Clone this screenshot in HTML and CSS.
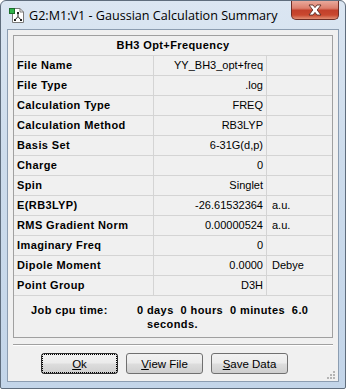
FILE: index.html
```html
<!DOCTYPE html>
<html lang="en">
<head>
  <meta charset="UTF-8">
  <title>G2:M1:V1 - Gaussian Calculation Summary</title>
  <link rel="stylesheet" href="styles.css">
</head>
<body>
  <div class="window">
    <div class="titlebar">
      <svg class="app-icon" width="16" height="16" viewBox="0 0 16 16">
        <path d="M3.5 1.5 H11 L14.5 5 V15.5 H3.5 Z" fill="#fff" stroke="#7a7a7a"/>
        <path d="M11 1.5 V5 H14.5" fill="none" stroke="#7a7a7a"/>
        <rect x="0.5" y="1.5" width="5" height="5" fill="#2fb34a" stroke="#1c6e2c"/>
        <path d="M9 6 V9.5 M9 9.5 L6 13 M9 9.5 L12 13" fill="none" stroke="#222" stroke-width="1"/>
        <rect x="8" y="5" width="2" height="2" fill="#222"/>
        <rect x="5" y="12" width="2" height="2" fill="#222"/>
        <rect x="11" y="12" width="2" height="2" fill="#222"/>
      </svg>
      <span class="title">G2:M1:V1 - Gaussian Calculation Summary</span>
      <div class="close">
        <svg width="14" height="12" viewBox="0 0 14 12">
          <path d="M1 1 H5 L7 3.6 L9 1 H13 L9.2 6 L13 11 H9 L7 8.4 L5 11 H1 L4.8 6 Z" fill="#fff" stroke="#5a2a22" stroke-width="0.9"/>
        </svg>
      </div>
    </div>

    <div class="client">
      <div class="summary">
        <div class="cell head">BH3 Opt+Frequency</div>

        <div class="cell label">File Name</div>
        <div class="cell value">YY_BH3_opt+freq</div>
        <div class="cell unit"></div>

        <div class="cell label">File Type</div>
        <div class="cell value">.log</div>
        <div class="cell unit"></div>

        <div class="cell label">Calculation Type</div>
        <div class="cell value">FREQ</div>
        <div class="cell unit"></div>

        <div class="cell label">Calculation Method</div>
        <div class="cell value">RB3LYP</div>
        <div class="cell unit"></div>

        <div class="cell label">Basis Set</div>
        <div class="cell value">6-31G(d,p)</div>
        <div class="cell unit"></div>

        <div class="cell label">Charge</div>
        <div class="cell value">0</div>
        <div class="cell unit"></div>

        <div class="cell label">Spin</div>
        <div class="cell value">Singlet</div>
        <div class="cell unit"></div>

        <div class="cell label">E(RB3LYP)</div>
        <div class="cell value">-26.61532364</div>
        <div class="cell unit">a.u.</div>

        <div class="cell label">RMS Gradient Norm</div>
        <div class="cell value">0.00000524</div>
        <div class="cell unit">a.u.</div>

        <div class="cell label">Imaginary Freq</div>
        <div class="cell value">0</div>
        <div class="cell unit"></div>

        <div class="cell label">Dipole Moment</div>
        <div class="cell value">0.0000</div>
        <div class="cell unit">Debye</div>

        <div class="cell label">Point Group</div>
        <div class="cell value">D3H</div>
        <div class="cell unit"></div>

        <div class="cell job">
          <span class="job-label">Job cpu time:</span>
          <span class="job-value">0 days&nbsp; 0 hours&nbsp; 0 minutes&nbsp; 6.0 seconds.</span>
        </div>
      </div>

      <div class="separator"></div>

      <div class="buttons">
        <button class="btn default"><span class="focus"><u>O</u>k</span></button>
        <button class="btn"><span><u>V</u>iew File</span></button>
        <button class="btn"><span><u>S</u>ave Data</span></button>
      </div>

      <svg class="grip" width="10" height="10" viewBox="0 0 10 10">
        <g fill="#b4b4b4">
          <rect x="7" y="1" width="2" height="2"/>
          <rect x="4" y="4" width="2" height="2"/>
          <rect x="7" y="4" width="2" height="2"/>
          <rect x="1" y="7" width="2" height="2"/>
          <rect x="4" y="7" width="2" height="2"/>
          <rect x="7" y="7" width="2" height="2"/>
        </g>
      </svg>
    </div>
  </div>
</body>
</html>
```

FILE: styles.css
```css
html, body {
  margin: 0;
  padding: 0;
  background: #ffffff;
}

.window {
  box-sizing: border-box;
  width: 346px;
  height: 389px;
  display: flex;
  flex-direction: column;
  border: 1px solid #5f6d7d;
  border-radius: 6px 6px 2px 2px;
  background: linear-gradient(180deg, #dbe6f2 0%, #cddcec 40%, #c3d5e9 100%);
}

/* title bar */
.titlebar {
  height: 28px;
  display: flex;
  align-items: flex-start;
}
.app-icon {
  margin: 6px 0 0 8px;
  flex: none;
}
.title {
  margin: 6px 0 0 4px;
  font-family: "Open Sans", "Noto Sans", sans-serif;
  font-size: 12.6px;
  line-height: 17px;
  color: #000;
  white-space: nowrap;
}
.close {
  box-sizing: border-box;
  margin-left: auto;
  margin-right: 6px;
  width: 48px;
  height: 19px;
  display: flex;
  align-items: center;
  justify-content: center;
  border: 1px solid #6e2e26;
  border-top: none;
  border-radius: 0 0 5px 5px;
  background: linear-gradient(180deg, #e9a99b 0%, #dc7f6d 40%, #c2402b 52%, #c9482f 78%, #e18f74 100%);
}

/* client area */
.client {
  position: relative;
  flex: 1;
  margin: 0 6px 6px 6px;
  padding: 5px 5px 0 5px;
  border: 1px solid #8c9db1;
  background: #f0f0f0;
  display: flex;
  flex-direction: column;
}

.summary {
  display: grid;
  grid-template-columns: 139px 112px 65px;
  grid-template-rows: 19px repeat(12, 19px) 41px;
  gap: 1px;
  border: 1px solid #a0a0a0;
  background: #d4d4d4;
  font-family: "Liberation Sans", Arial, sans-serif;
  font-size: 11px;
  color: #000;
}
.cell {
  background: #f0f0f0;
  line-height: 19px;
  white-space: nowrap;
  overflow: hidden;
}
.head {
  grid-column: 1 / 4;
  text-align: center;
  font-weight: bold;
  letter-spacing: 0.4px;
}
.label {
  padding-left: 3px;
  font-weight: bold;
  letter-spacing: 0.4px;
}
.value {
  text-align: right;
  padding-right: 3px;
}
.unit {
  padding-left: 5px;
}
.job {
  grid-column: 1 / 4;
  display: flex;
  align-items: flex-start;
  padding-top: 7px;
  font-weight: bold;
  letter-spacing: 0.4px;
  line-height: 14px;
  white-space: normal;
}
.job-label {
  flex: none;
  box-sizing: border-box;
  width: 123px;
  padding-left: 17px;
}
.job-value {
  padding-left: 10px;
  text-indent: -10px;
  padding-right: 4px;
}

.separator {
  margin-top: 6px;
  border-top: 1px solid #a0a0a0;
  border-bottom: 1px solid #ffffff;
}

.buttons {
  display: flex;
  gap: 8px;
  margin-top: 7px;
  padding-left: 28px;
}
.btn {
  box-sizing: border-box;
  width: 77px;
  height: 21px;
  padding: 0;
  display: flex;
  align-items: stretch;
  justify-content: stretch;
  border: 1px solid #707070;
  border-radius: 3px;
  background: linear-gradient(180deg, #f2f2f2 0%, #ebebeb 48%, #dddddd 52%, #cfcfcf 100%);
  font-family: "Liberation Sans", Arial, sans-serif;
  font-size: 11.5px;
  color: #000;
}
.btn span {
  flex: 1;
  display: flex;
  align-items: center;
  justify-content: center;
}
.btn.default {
  border-color: #2c2c2c;
}
.btn .focus {
  margin: 1px;
  outline: 1px dotted #000;
}

.grip {
  position: absolute;
  right: 2px;
  bottom: 1px;
}
```
